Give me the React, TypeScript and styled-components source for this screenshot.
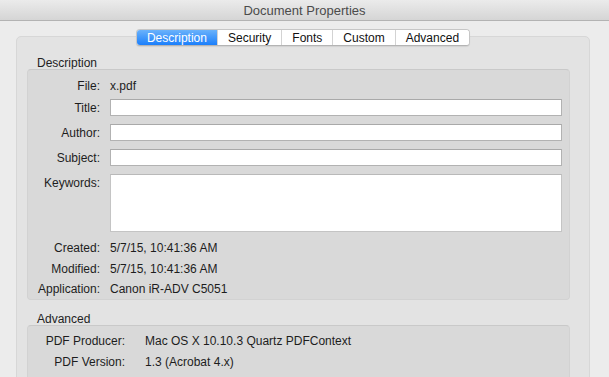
import React from "react";
import styled, { createGlobalStyle } from "styled-components";

const tabs = ["Description", "Security", "Fonts", "Custom", "Advanced"];

const descriptionRows = [
  { label: "Created:", value: "5/7/15, 10:41:36 AM", gap: 7 },
  { label: "Modified:", value: "5/7/15, 10:41:36 AM", gap: 4 },
  { label: "Application:", value: "Canon iR-ADV C5051", gap: 3 },
];

const advancedRows = [
  { label: "PDF Producer:", value: "Mac OS X 10.10.3 Quartz PDFContext", gap: 6 },
  { label: "PDF Version:", value: "1.3 (Acrobat 4.x)", gap: 4 },
];

const App: React.FC = () => {
  return (
    <Window>
      <GlobalStyle />
      <TitleBar>Document Properties</TitleBar>
      <Content>
        <TabView>
          <Tabs>
            {tabs.map((t, i) => (
              <Tab key={t} $active={i === 0}>
                {t}
              </Tab>
            ))}
          </Tabs>

          <GroupLabel $gap={9}>Description</GroupLabel>
          <GroupBox>
            <Row $gap={7}>
              <Label>File:</Label>
              <Value>x.pdf</Value>
            </Row>
            <Row $gap={5}>
              <Label>Title:</Label>
              <TextField />
            </Row>
            <Row $gap={8}>
              <Label>Author:</Label>
              <TextField />
            </Row>
            <Row $gap={8}>
              <Label>Subject:</Label>
              <TextField />
            </Row>
            <Row $gap={8} $top>
              <Label>Keywords:</Label>
              <TextArea />
            </Row>
            {descriptionRows.map((r) => (
              <Row key={r.label} $gap={r.gap}>
                <Label>{r.label}</Label>
                <Value>{r.value}</Value>
              </Row>
            ))}
            <BoxEnd $size={2} />
          </GroupBox>

          <GroupLabel $gap={11}>Advanced</GroupLabel>
          <GroupBox>
            {advancedRows.map((r) => (
              <Row key={r.label} $gap={r.gap} $wide>
                <Label>{r.label}</Label>
                <Value>{r.value}</Value>
              </Row>
            ))}
            <BoxEnd $size={40} />
          </GroupBox>
        </TabView>
      </Content>
    </Window>
  );
};

export default App;

const GlobalStyle = createGlobalStyle`
  html, body {
    margin: 0;
    padding: 0;
    background: #ececec;
  }
  * {
    box-sizing: border-box;
  }
`;

const Window = styled.div`
  width: 609px;
  height: 377px;
  overflow: hidden;
  background: #ececec;
  font-family: "Liberation Sans", Arial, sans-serif;
  font-size: 12px;
  color: #1d1d1d;
`;

const TitleBar = styled.div`
  height: 21px;
  line-height: 22px;
  text-align: center;
  font-size: 13px;
  color: #4b4b4b;
  background: linear-gradient(#ebebeb, #d5d5d5);
  border-bottom: 1px solid #b3b3b3;
`;

const Content = styled.div`
  padding: 15px 19px 0 16px;
`;

const TabView = styled.div`
  display: flex;
  flex-direction: column;
  padding: 0 19px 0 10px;
  background: #e3e3e3;
  border: 1px solid #d7d7d7;
  border-radius: 5px;
  height: 400px;
`;

const Tabs = styled.div`
  align-self: center;
  display: flex;
  height: 17px;
  margin-top: -8px;
  margin-left: 9px;
  background: #fff;
  border: 1px solid #c6c6c6;
  border-bottom-color: #b4b4b4;
  border-radius: 4px;
  box-shadow: 0 1px 1px rgba(0, 0, 0, 0.08);
  overflow: hidden;
`;

const Tab = styled.div<{ $active?: boolean }>`
  padding: 0 10px;
  line-height: 16px;
  font-size: 12px;
  color: ${(p) => (p.$active ? "#fff" : "#111")};
  background: ${(p) =>
    p.$active ? "linear-gradient(#6ab2fb, #1b7ffb)" : "#fff"};
  & + & {
    border-left: 1px solid #d3d3d3;
  }
`;

const GroupLabel = styled.div<{ $gap: number }>`
  margin-top: ${(p) => p.$gap}px;
  padding-left: 10px;
  height: 14px;
  line-height: 16px;
  color: #222;
`;

const GroupBox = styled.div`
  display: flex;
  flex-direction: column;
  padding-right: 7px;
  background: #d9d9d9;
  border: 1px solid #d2d2d2;
  border-top-color: #c9c9c9;
  border-radius: 4px;
`;

const Row = styled.div<{ $gap: number; $top?: boolean; $wide?: boolean }>`
  display: grid;
  grid-template-columns: ${(p) => (p.$wide ? "97px" : "72px")} 1fr;
  column-gap: ${(p) => (p.$wide ? "20px" : "10px")};
  align-items: ${(p) => (p.$top ? "start" : "center")};
  margin-top: ${(p) => p.$gap}px;
  min-height: 17px;
`;

const Label = styled.div`
  text-align: right;
  padding-top: 2px;
  line-height: 15px;
  white-space: nowrap;
`;

const Value = styled.div`
  padding-top: 2px;
  line-height: 15px;
  white-space: nowrap;
`;

const TextField = styled.div`
  height: 17px;
  background: #fff;
  border: 1px solid #b2b2b2;
  border-top-color: #a9a9a9;
`;

const TextArea = styled.div`
  height: 58px;
  background: #fff;
  border: 1px solid #c4c4c4;
  border-top-color: #b9b9b9;
`;

const BoxEnd = styled.div<{ $size: number }>`
  height: ${(p) => p.$size}px;
`;
